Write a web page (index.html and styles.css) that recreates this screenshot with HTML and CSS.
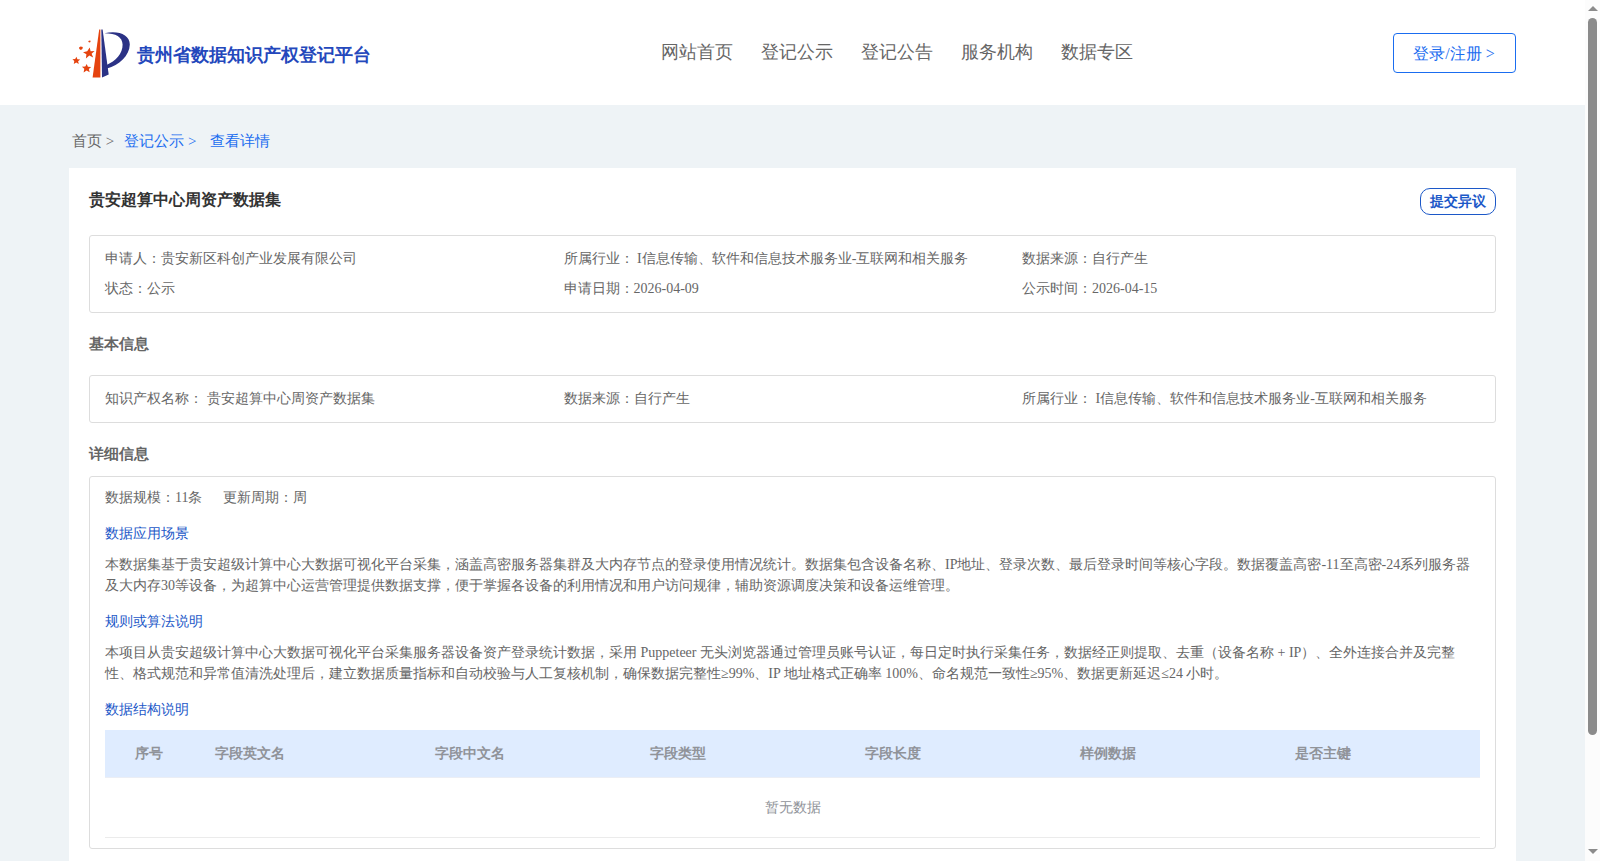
FILE: index.html
```html
<!DOCTYPE html>
<html lang="en">
<head>
    <meta charset="UTF-8">
    <meta name="viewport" content="width=device-width, initial-scale=1.0">
    <title>贵州省数据知识产权登记平台</title>
    <link rel="stylesheet" href="styles.css">
</head>
<body>
    <!-- 顶部导航 -->
    <header class="header">
        <div class="container header-inner">
            <a href="#" class="logo">
                <svg class="logo-icon" width="60" height="52" viewBox="0 0 60 52">
                    <path d="M27.2 2.5 L28.4 2.5 V50.5 H20.6 Z" fill="#e5430f"/>
                    <path d="M29.3 2.5 H30.6 L36.7 47.5 L30 50.5 Z" fill="#2b3285"/>
                    <path d="M32.5 6.2 C46 3 57.8 7.5 57.8 17.5 C57.5 29 47 38 35 41.6 L34.6 38 C43.5 34 50.8 26.5 50.6 17.5 C50.3 10 44 6.2 32.5 6.2 Z" fill="#2b3285"/>
                    <g fill="#e5430f">
                        <path d="M17.7 20.5 L18.6 24.2 L22.6 24 L19.6 26.8 L21.2 30.5 L17.3 28.6 L13.9 31.6 L14.4 27.3 L11 25.3 L15.2 24.3 Z"/>
                        <path d="M4.4 29.8 L5.4 32.2 L8.2 32.4 L6.1 34.2 L6.8 36.9 L4.2 35.5 L1.8 37.1 L2.3 34.1 L0.4 32.2 L3.2 32 Z"/>
                        <path d="M14.7 37 L15.9 39.7 L19.2 39.9 L16.8 42 L17.7 45.3 L14.6 43.5 L11.6 45.4 L12.3 41.8 L9.9 39.8 L13.3 39.6 Z"/>
                        <path d="M8.6 19.6 L10.8 19.9 L10.4 22 L8.8 23.1 L7.3 22 L7 20.4 Z"/>
                        <path d="M16.8 13.8 L18.3 13.4 L18.6 15 L17.3 15.5 L16.2 14.8 Z"/>
                    </g>
                </svg>
                <span class="logo-text">贵州省数据知识产权登记平台</span>
            </a>
            <nav class="nav">
                <a href="#">网站首页</a>
                <a href="#">登记公示</a>
                <a href="#">登记公告</a>
                <a href="#">服务机构</a>
                <a href="#">数据专区</a>
            </nav>
            <a href="#" class="login-btn">登录/注册 &gt;</a>
        </div>
    </header>

    <main class="container">
        <!-- 面包屑 -->
        <div class="breadcrumb">
            <span>首页 &gt;</span>
            <a href="#">登记公示 &gt;</a>
            <a href="#" class="current">查看详情</a>
        </div>

        <div class="card">
            <div class="card-head">
                <h1 class="card-title">贵安超算中心周资产数据集</h1>
                <button class="objection-btn">提交异议</button>
            </div>

            <div class="info-box">
                <div>申请人：贵安新区科创产业发展有限公司</div>
                <div>所属行业： I信息传输、软件和信息技术服务业-互联网和相关服务</div>
                <div>数据来源：自行产生</div>
                <div>状态：公示</div>
                <div>申请日期：2026-04-09</div>
                <div>公示时间：2026-04-15</div>
            </div>

            <h2 class="section-title">基本信息</h2>
            <div class="info-box">
                <div>知识产权名称： 贵安超算中心周资产数据集</div>
                <div>数据来源：自行产生</div>
                <div>所属行业： I信息传输、软件和信息技术服务业-互联网和相关服务</div>
            </div>

            <h2 class="section-title detail-title">详细信息</h2>
            <div class="detail-box">
                <div class="scale">
                    <span>数据规模：11条</span>
                    <span>更新周期：周</span>
                </div>
                <h3 class="sub-title">数据应用场景</h3>
                <p class="text">本数据集基于贵安超级计算中心大数据可视化平台采集，涵盖高密服务器集群及大内存节点的登录使用情况统计。数据集包含设备名称、IP地址、登录次数、最后登录时间等核心字段。数据覆盖高密-11至高密-24系列服务器及大内存30等设备，为超算中心运营管理提供数据支撑，便于掌握各设备的利用情况和用户访问规律，辅助资源调度决策和设备运维管理。</p>
                <h3 class="sub-title">规则或算法说明</h3>
                <p class="text">本项目从贵安超级计算中心大数据可视化平台采集服务器设备资产登录统计数据，采用 Puppeteer 无头浏览器通过管理员账号认证，每日定时执行采集任务，数据经正则提取、去重（设备名称 + IP）、全外连接合并及完整性、格式规范和异常值清洗处理后，建立数据质量指标和自动校验与人工复核机制，确保数据完整性≥99%、IP 地址格式正确率 100%、命名规范一致性≥95%、数据更新延迟≤24 小时。</p>
                <h3 class="sub-title">数据结构说明</h3>
                <div class="table">
                    <div class="table-head">
                        <span>序号</span>
                        <span>字段英文名</span>
                        <span>字段中文名</span>
                        <span>字段类型</span>
                        <span>字段长度</span>
                        <span>样例数据</span>
                        <span>是否主键</span>
                    </div>
                    <div class="table-empty">暂无数据</div>
                </div>
            </div>
        </div>
    </main>

    <!-- 滚动条 -->
    <div class="scrollbar">
        <i class="arrow up"></i>
        <i class="thumb"></i>
        <i class="arrow down"></i>
    </div>
</body>
</html>
```
FILE: styles.css
```css
* {
    margin: 0;
    padding: 0;
    box-sizing: border-box;
}

body {
    height: 861px;
    padding-right: 15px;
    overflow: hidden;
    background: #eef3f6;
    font-family: "Liberation Serif", serif;
    font-size: 14px;
    color: #666;
}

a {
    color: inherit;
    text-decoration: none;
}

.container {
    width: 1447px;
    margin: 0 auto;
}

/* 顶部导航 */
.header {
    height: 105px;
    background: #fff;
}

.header-inner {
    display: flex;
    align-items: center;
    height: 105px;
    padding-left: 3px;
}

.logo {
    display: flex;
    align-items: center;
    width: 588.5px;
    color: #2448bc;
}

.logo-icon {
    margin-right: 5px;
}

.logo-text {
    padding-top: 4px;
    font-size: 18px;
    font-weight: bold;
    line-height: 26px;
    white-space: nowrap;
}

.nav {
    display: flex;
    gap: 28px;
    font-size: 18px;
    line-height: 26px;
    padding-bottom: 2px;
}

.login-btn {
    width: 123px;
    height: 40px;
    margin-left: auto;
    padding-right: 1px;
    border: 1px solid #1a6df0;
    border-radius: 4px;
    color: #1a6df0;
    font-size: 16px;
    line-height: 40px;
    text-align: center;
}

/* 面包屑 */
.breadcrumb {
    display: flex;
    height: 63px;
    padding: 3px 0 0 3px;
    font-size: 15px;
    line-height: 66px;
}

.breadcrumb a {
    margin-left: 10px;
    color: #1a6df0;
}

.breadcrumb .current {
    margin-left: 13.5px;
}

/* 内容卡片 */
.card {
    height: 693px;
    padding: 20px 20px 0;
    background: #fff;
}

.card-head {
    display: flex;
    justify-content: space-between;
    height: 47px;
}

.card-title {
    color: #333;
    font-size: 16px;
    line-height: 24px;
}

.objection-btn {
    width: 76px;
    height: 27px;
    background: #fff;
    border: 1px solid #1c58c8;
    border-radius: 10px;
    color: #1c58c8;
    font-family: inherit;
    font-size: 14px;
    font-weight: bold;
    line-height: 25px;
}

.info-box {
    display: grid;
    grid-template-columns: repeat(3, 1fr);
    padding: 8px 14.5px 8px 15px;
    border: 1px solid #ddd;
    border-radius: 3px;
    line-height: 30px;
    white-space: nowrap;
}

.section-title {
    height: 62px;
    font-size: 15px;
    line-height: 62px;
}

.detail-title {
    height: 53px;
}

.detail-box {
    height: 373px;
    padding: 10px 15px;
    border: 1px solid #ddd;
    border-radius: 3px;
    line-height: 21px;
}

.scale {
    display: flex;
    gap: 21px;
}

.sub-title {
    margin-top: 15px;
    color: #1c58c8;
    font-size: 14px;
    font-weight: normal;
}

.text {
    margin-top: 10px;
}

/* 数据结构表 */
.table {
    margin-top: 10px;
}

.table-head {
    display: grid;
    grid-template-columns: 110px 220px 215px 215px 215px 215px 1fr;
    height: 48px;
    background: #dfecff;
    border-bottom: 1px solid #ebeef5;
    color: #909399;
    font-weight: bold;
    line-height: 47px;
}

.table-head span:first-child {
    padding-left: 30px;
}

.table-empty {
    height: 60px;
    border-bottom: 1px solid #ebebeb;
    color: #909399;
    line-height: 59px;
    text-align: center;
}

/* 滚动条 */
.scrollbar {
    position: fixed;
    top: 0;
    right: 0;
    width: 15px;
    height: 861px;
    padding: 6px 3px 7px;
    background: #fcfcfc;
    display: flex;
    flex-direction: column;
}

.arrow {
    border: 5px solid transparent;
    border-top-width: 0;
    border-bottom-width: 0;
}

.arrow.up {
    border-bottom: 5px solid #8b8b8b;
}

.arrow.down {
    margin-top: auto;
    border-top: 5px solid #8b8b8b;
}

.thumb {
    height: 717px;
    margin-top: 7px;
    border-radius: 5px;
    background: #8b8b8b;
}
```
